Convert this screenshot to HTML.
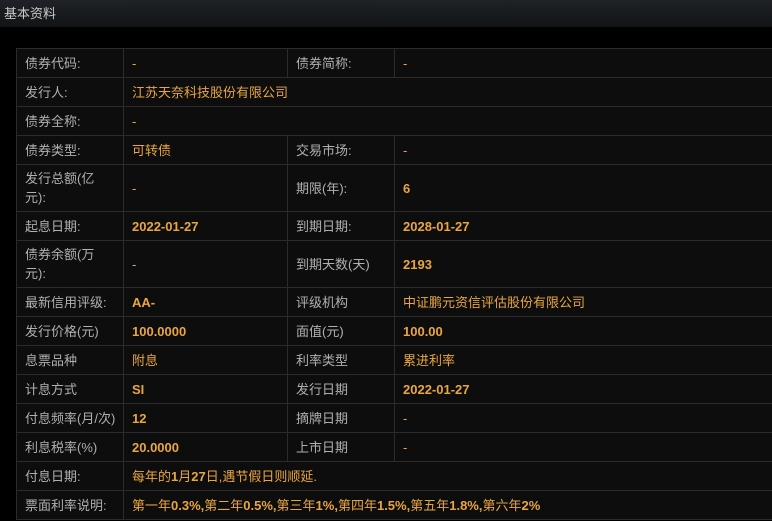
<!DOCTYPE html>
<html><head><meta charset="utf-8"><style>
body{margin:0;width:772px;height:521px;background:#000;overflow:hidden;font-family:"Liberation Sans","Noto Sans CJK SC",sans-serif;font-size:13px}
.hd{height:27px;background:linear-gradient(#1f2226,#121416);color:#c8c8c8;line-height:27px;padding-left:4px;font-size:13px}
table{position:absolute;left:16px;top:48px;width:780px;border-collapse:collapse;background:#0d0d0d;table-layout:fixed}
td{border:1px solid #2b2b2b;padding:0 8px;height:28px;color:#b0b0b0;line-height:19px;white-space:nowrap}
td.v{color:#e9a640}
b{font-weight:bold}
tr.t td{height:46px}
</style></head><body>
<div class="hd">基本资料</div>
<table>
<colgroup><col style="width:107px"><col style="width:164px"><col style="width:107px"><col></colgroup>
<tr><td>债券代码:</td><td class="v">-</td><td>债券简称:</td><td class="v">-</td></tr>
<tr><td>发行人:</td><td class="v" colspan="3">江苏天奈科技股份有限公司</td></tr>
<tr><td>债券全称:</td><td class="v" colspan="3">-</td></tr>
<tr><td>债券类型:</td><td class="v">可转债</td><td>交易市场:</td><td class="v">-</td></tr>
<tr class="t"><td>发行总额(亿<br>元):</td><td class="v">-</td><td>期限(年):</td><td class="v"><b>6</b></td></tr>
<tr><td>起息日期:</td><td class="v"><b>2022-01-27</b></td><td>到期日期:</td><td class="v"><b>2028-01-27</b></td></tr>
<tr class="t"><td>债券余额(万<br>元):</td><td class="v">-</td><td>到期天数(天)</td><td class="v"><b>2193</b></td></tr>
<tr><td>最新信用评级:</td><td class="v"><b>AA-</b></td><td>评级机构</td><td class="v">中证鹏元资信评估股份有限公司</td></tr>
<tr><td>发行价格(元)</td><td class="v"><b>100.0000</b></td><td>面值(元)</td><td class="v"><b>100.00</b></td></tr>
<tr><td>息票品种</td><td class="v">附息</td><td>利率类型</td><td class="v">累进利率</td></tr>
<tr><td>计息方式</td><td class="v"><b>SI</b></td><td>发行日期</td><td class="v"><b>2022-01-27</b></td></tr>
<tr><td>付息频率(月/次)</td><td class="v"><b>12</b></td><td>摘牌日期</td><td class="v">-</td></tr>
<tr><td>利息税率(%)</td><td class="v"><b>20.0000</b></td><td>上市日期</td><td class="v">-</td></tr>
<tr><td>付息日期:</td><td class="v" colspan="3">每年的<b>1</b>月<b>27</b>日,遇节假日则顺延.</td></tr>
<tr><td>票面利率说明:</td><td class="v" colspan="3">第一年<b>0.3%,</b>第二年<b>0.5%,</b>第三年<b>1%,</b>第四年<b>1.5%,</b>第五年<b>1.8%,</b>第六年<b>2%</b></td></tr>
</table>
</body></html>
